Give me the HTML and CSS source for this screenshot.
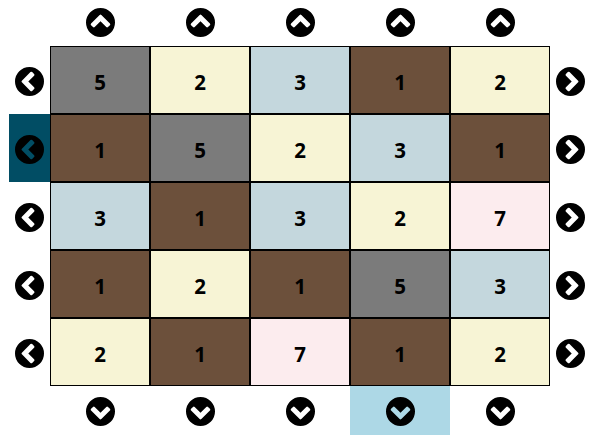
FILE: index.html
```
<!DOCTYPE html>
<html lang="en">
<head>
<meta charset="utf-8">
<title>Board</title>
<link rel="stylesheet" href="styles.css">
</head>
<body>
<svg class="defs" aria-hidden="true">
  <symbol id="chevron" viewBox="128 128 1536 1536">
    <path fill-rule="evenodd" d="M1037 1395l102-102q19-19 19-45t-19-45L832 896l307-307q19-19 19-45t-19-45l-102-102q-19-19-45-19t-45 19L493 851q-19 19-19 45t19 45l454 454q19 19 45 19t45-19zM1664 896A768 768 0 1 1 128 896A768 768 0 1 1 1664 896z"/>
  </symbol>
</svg>
<main class="board" id="board"></main>
<script src="board.js"></script>
</body>
</html>
```
FILE: styles.css
```
body {
  margin: 0;
  background: #fff;
  font-family: "Open Sans", "Noto Sans", sans-serif;
}

.defs {
  display: block;
  width: 0;
  height: 0;
}

.board {
  display: grid;
  grid-template-columns: 41px repeat(5, 100px) 41px;
  grid-template-rows: 46.4px repeat(5, 68.02px) 48.9px;
  padding-left: 9px;
}

.arrow {
  display: flex;
  align-items: center;
  justify-content: center;
  box-sizing: border-box;
}

.left,
.right {
  padding-top: 2px;
}

.icon {
  width: 29px;
  height: 29px;
}

.up { padding-bottom: 1.5px; }
.down { padding-top: 2px; }
.up .icon { transform: rotate(90deg); }
.right .icon { transform: rotate(180deg); }
.down .icon { transform: rotate(-90deg); }

.hover { background: #add8e6; }
.active { background: #014d64; }

.cell {
  display: flex;
  align-items: center;
  justify-content: center;
  box-sizing: border-box;
  border: 1px solid #000;
  padding-top: 4px;
  font-size: 20.5px;
  font-weight: 700;
  line-height: 28px;
}

.v1 { background: #6c503b; }
.v2 { background: #f7f4d5; }
.v3 { background: #c4d7dd; }
.v5 { background: #7b7b7b; }
.v7 { background: #fcecee; }
```
FILE: board.js
```
const rows = [
  [5, 2, 3, 1, 2],
  [1, 5, 2, 3, 1],
  [3, 1, 3, 2, 7],
  [1, 2, 1, 5, 3],
  [2, 1, 7, 1, 2]
];

const arrow = (dir, state = "") =>
  `<div class="arrow ${dir} ${state}"><svg class="icon"><use href="#chevron"/></svg></div>`;

let html = "<div></div>" + rows.map(() => arrow("up")).join("") + "<div></div>";
rows.forEach((row, r) => {
  html += arrow("left", r === 1 ? "active" : "");
  html += row.map(v => `<div class="cell v${v}">${v}</div>`).join("");
  html += arrow("right");
});
html += "<div></div>" + rows.map((_, c) => arrow("down", c === 3 ? "hover" : "")).join("");

document.getElementById("board").innerHTML = html;
```
